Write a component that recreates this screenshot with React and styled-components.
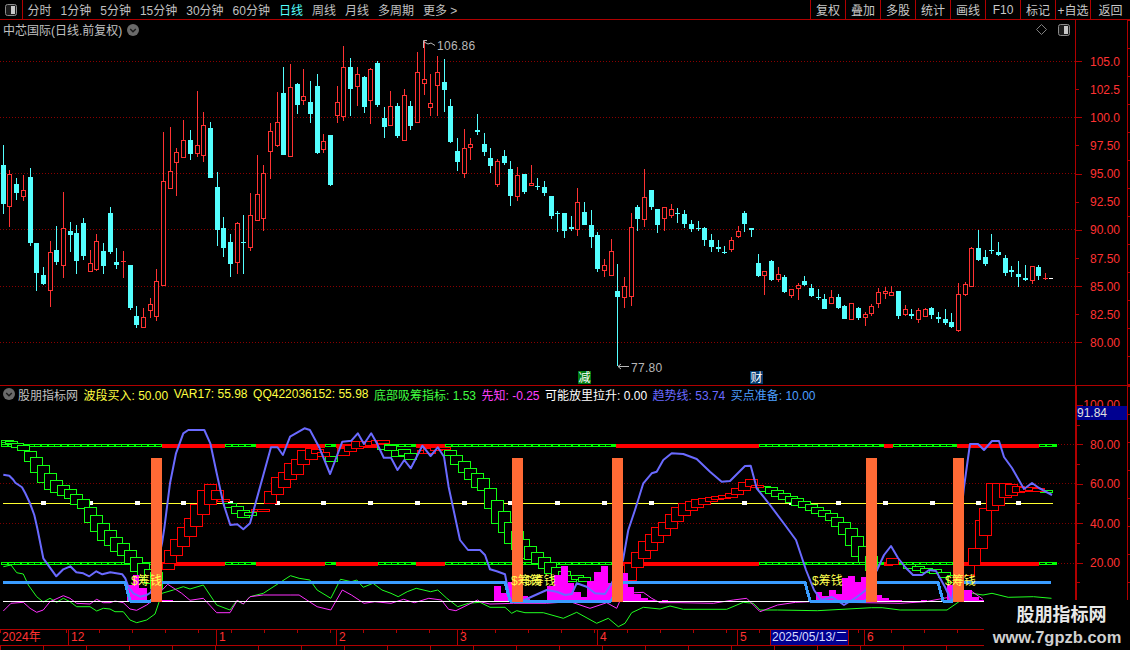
import React from 'react'
import styled, { createGlobalStyle } from 'styled-components'

const RED_LINE = '#b00000'
const UP = '#ff3232'
const DOWN = '#54ffff'
const FONT = `"Liberation Sans", "Noto Sans CJK SC", sans-serif`

const GlobalStyle = createGlobalStyle`
  html, body { margin: 0; padding: 0; background: #000; overflow: hidden; }
  body { font-family: ${FONT}; font-size: 12px; color: #c0c0c0; }
`

// candles as read from the chart: [kind, high, bodyTop, bodyBottom, low], zoomed 3x around yBase
const zoneA = [['c',315,375,492,522],['r',390,402,500,561],['c',414,432,459,480],['r',405,451,470,483],['c',384,411,609,618],['c',609,609,699,753],['c',681,705,732,735],['r',603,637,752,801],['c',558,630,666,675],['r',456,565,677,714],['c',546,573,585,636],['c',555,579,663,702],['c',534,549,648,660],['r',630,670,697,697],['r',582,604,689,693],['c',609,633,678,702],['c',501,519,636,642],['c',624,666,675,687],['r',633,664,665,714],['c',675,675,804,810],['c',798,828,855,864],['r',804,832,863,863],['r',774,793,812,834],['r',687,724,830,843],['r',276,424,738,738],['r',261,394,446,446],['r',324,337,368,468],['r',240,301,353,353],['c',270,300,342,360],['r',153,316,341,351],['r',216,256,347,366],['c',246,264,414,414],['c',396,441,570,618],['c',531,564,624,651],['c',582,606,672,711],['r',546,550,668,702],['c',525,606,608,702],['r',459,526,623,633],['r',345,463,542,542],['r',375,400,536,573],['r',249,274,335,417],['r',156,247,317,320]]
const zoneB = [['c',111,189,375,375],['r',102,172,380,380],['c',159,163,225,252],['r',117,199,212,225],['c',153,216,252,279],['c',132,168,369,372],['r',312,334,359,369],['c',315,315,465,468],['r',168,217,257,279],['r',48,112,260,273],['c',84,111,177,258],['r',111,133,170,228],['c',138,141,231,249],['r',114,118,212,282],['c',93,99,225,231],['c',231,264,291,324],['r',183,229,287,287],['c',219,228,318,324],['r',177,196,332,332],['c',213,228,288,300],['r',66,127,278,278],['r',30,148,161,195],['r',132,220,233,258],['r',78,127,167,258],['c',87,156,180,246],['c',207,228,336,339],['c',324,363,396,423],['r',297,355,431,444],['r',324,343,353,390],['c',252,300,305,315],['c',309,342,366,378],['c',354,384,408,429],['r',387,394,464,471],['c',360,378,399,405],['c',393,417,498,528],['r',411,436,500,513],['c',432,432,486,492],['r',405,460,467,467],['c',444,468,470,480],['c',453,471,489,498],['c',498,498,558,567],['c',543,549,551,606]]
const zoneC = [['c',159,159,213,234],['c',168,201,207,213],['r',84,127,209,228],['c',126,156,195,195],['c',150,195,231,264],['c',216,225,327,336],['r',297,316,332,351],['r',237,274,347,347],['c',312,393,411,618],['r',351,379,413,444],['r',159,202,410,438],['c',135,141,177,213],['r',27,112,181,201],['c',90,90,141,150],['c',147,147,195,219],['r',141,142,176,213],['r',132,148,167,174],['c',144,159,161,189],['c',150,162,192,204],['c',180,192,207,216],['c',183,205,207,213],['c',201,204,240,258],['c',222,240,261,276],['c',240,262,267,276],['c',258,277,279,282],['r',231,241,269,276],['r',198,214,231,234],['c',153,159,192,216],['c',204,204,209,231],['c',282,309,348,351],['r',334,334,347,405],['c',300,303,360,363],['r',321,343,359,366],['c',345,351,396,399],['r',388,388,408,414],['r',369,376,388,420],['c',348,363,375,378],['c',372,384,408,411],['c',387,411,415,420]]
const zoneD = [['c',252,267,297,297],['r',240,262,281,281],['c',252,261,294,297],['c',285,288,327,327],['r',280,280,329,329],['c',291,294,324,330],['r',306,313,323,348],['r',282,289,311,318],['r',234,247,281,294],['r',231,244,251,267],['r',228,247,257,257],['c',243,243,318,327],['r',285,298,315,318],['c',297,312,318,327],['r',294,301,329,339],['r',294,298,320,321],['c',291,294,315,327],['c',306,321,327,339],['c',297,327,339,345],['c',309,336,351,354],['r',219,253,362,366],['r',216,223,255,258],['r',111,115,230,230],['c',60,114,150,153],['c',120,141,162,168],['c',72,120,123,132],['c',96,126,135,138],['c',135,144,189,198],['c',168,180,186,201],['c',153,192,201,231],['c',165,204,210,213],['r',168,169,212,222],['c',165,171,198,210],['r',189,204,209,209]]

const toReal = (list, base) => list.map(([k, ...v]) => [k, ...v.map(n => base + n / 3)])
const candles = [...toReal(zoneA, 40), ...toReal(zoneB, 30), ...toReal(zoneC, 160), ...toReal(zoneD, 210)]

const tabs = [
  { label: '分时' }, { label: '1分钟' }, { label: '5分钟' }, { label: '15分钟' }, { label: '30分钟' },
  { label: '60分钟' }, { label: '日线', active: true }, { label: '周线' }, { label: '月线' }, { label: '多周期' }, { label: '更多 >' },
]
const actions = ['复权', '叠加', '多股', '统计', '画线', 'F10', '标记', '+自选', '返回']
const prices = ['105.0', '102.5', '100.0', '97.50', '95.00', '92.50', '90.00', '87.50', '85.00', '82.50', '80.00']
const lowerAxis = ['100.00', '', '80.00', '', '60.00', '', '40.00', '', '20.00', '']

const readouts = [
  { text: '波段买入: 50.00', color: '#ffff40' },
  { text: 'VAR17: 55.98', color: '#ffff40' },
  { text: 'QQ422036152: 55.98', color: '#ffff40' },
  { text: '底部吸筹指标: 1.53', color: '#40ff40' },
  { text: '先知: -0.25', color: '#ff40ff' },
  { text: '可能放里拉升: 0.00', color: '#ffffff' },
  { text: '趋势线: 53.74', color: '#6a6aff' },
  { text: '买点准备: 10.00', color: '#4d9fff' },
]

const months = [
  { w: 68, label: '2024年' }, { w: 148, label: '12' }, { w: 120, label: '1' }, { w: 121, label: '2' },
  { w: 140, label: '3' }, { w: 140, label: '4' }, { w: 33, label: '5' }, { w: 78, label: '2025/05/13/二', current: true },
  { w: 16, label: '' }, { w: 120, label: '6' },
]

// z3: the 3x crops, xz: the wider crops which came out about 2.775x across
const z3 = (list, ox, oy) => list.map(([x, ...rest]) => [ox + x / 3, ...rest.map(n => oy + n / 3)])
const xz = (list, ox, oy) => list.map(([x, ...rest]) => [ox + x / 2.775, ...rest.map(n => oy + n / 3)])
const pts = list => list.map(([x, y]) => `${x.toFixed(1)},${y.toFixed(1)}`).join(' ')
const byX = list => [...list].sort((a, b) => a[0] - b[0])

const bandRanges = [
  ['g', 1, 162], ['r', 162, 225], ['g', 225, 255.5], ['r', 255.5, 325], ['g', 325, 335.5], ['r', 335.5, 378], ['g', 378, 416],
  ['r', 416, 445], ['g', 445, 616], ['r', 616, 759], ['g', 759, 884], ['r', 884, 893], ['g', 893, 957], ['r', 957, 1039], ['g', 1039, 1057],
]

const greenBoxes = [
  ...z3([[3,31,37],[3,37,43],[14,34,41],[32,40,52],[52,46,62],[73,62,92],[91,82,127],[112,106,157],[133,130,177],[151,151,187],[172,166,196],[193,178,206],[211,193,223],[232,208,235],[253,232,277],[271,256,305],[292,280,331],[313,301,346],[331,322,364],[352,340,376],[373,361,400],[391,382,424],[412,400,442],[433,418,460],[451,427,475],[673,220,232],[694,229,250],[712,241,262],[733,247,256]], 0, 430),
  [325,456,461],[377,444,449],[384,445,450],[391,450,456],[397.5,449,455],[404,453,459],[444,450,455],[450,455,464],[457.7,461,472],[464,468,479],[471,473,487],
  ...z3([[-8,145,181],[13,175,236],[33,211,281],[55,244,308],[73,277,340],[94,304,358],[112,328,385],[133,349,388],[154,367,400],[175,382,415],[193,397,430],[214,412,445],[235,424,448],[253,436,454],[274,436,448],[295,442,454]], 480, 430),
  [758,486,491],[765,487,493],[771,490,496],[778,493,499],[785,496,502],[791,498,505],[798,501,507],[805,504,510],[811,507,513],[818,510,516],[825,513,520],[831,517,526],[838,522,534],[845,528,545],[851,536,556],[858,546,562],[865,556,570],
  [903,564,568],[912,566,570],[920,568,572],[929,569,573],[938,572,577],[947,575,582],[1040,490,492],
]
const redBoxes = [
  ...z3([[486,400,418],[493,361,400],[511,328,376],[532,292,349],[553,265,320],[571,223,289],[592,181,253],[613,163,223],[634,181,208],[652,208,214],[754,238,244],[772,237,244]], 0, 430),
  [264,491,503],[271,477,494],[277.5,472,487],[284,463,479],[291,459,474],[297,450,464],[304.5,448,459],[311,449,453],[317,452,456],
  [337,448,455],[344,445,451],[351,441,448],[358.5,441,446],[365,441,445],[371,440,444],[377,440,443],
  [417,450,453],[423,448,453],[430,447,450],[438,447,449],
  ...z3([[433,400,451],[454,367,412],[475,334,385],[496,311,358],[514,292,337],[535,277,317],[556,253,295],[574,232,274],[595,220,256],[616,214,241],[634,208,232],[655,205,223],[676,202,214],[694,199,208],[715,196,205],[736,190,202],[754,175,193],[775,157,181],[796,148,169],[812,165,172]], 480, 430),
  [886,558,564],[962,565,575],[968,548,565],[975,520,548],[979,508,535],[986,483,510],[992,483,505],[999,483,497],[1005,484,495],[1012,486,492],[1019,487,491],[1025,487,490],[1032,488,491],
]

const trendLine = [
  ...z3([[10,134],[28,137],[40,149],[46,158],[66,172],[76,190],[90,220],[103,255],[112,295],[121,340],[130,385],[169,439],[190,418],[211,409],[229,427],[250,430],[268,439],[289,424],[307,433],[331,427],[367,433],[376,445],[385,470],[400,490],[420,500],[440,495],[453,487],[486,340],[493,295],[510,160],[528,70],[550,10],[565,0],[592,0],[613,0],[631,40],[650,130],[670,220],[691,285],[712,283],[730,298],[750,280]], 0, 430),
  ...xz([[752,232],[770,232],[785,255],[805,200],[845,175],[860,180],[885,230],[916,312],[950,215],[975,212],[993,190],[1010,222],[1030,190],[1045,218],[1065,263],[1085,263],[1103,300],[1122,270],[1140,295],[1172,227],[1195,258],[1215,232],[1232,260],[1245,350]], 0, 370),
  [460,540],[468,550],
  ...z3([[0,360],[15,375],[30,418],[50,424],[75,433],[90,510],[133,510],[200,480],[230,485],[255,495],[275,492],[290,460],[320,470],[345,490],[375,492],[395,460],[429,390],[445,300],[465,240],[490,160],[515,130],[530,125],[550,90],[575,70],[610,72],[650,87],[690,125],[725,155],[750,153],[795,108],[812,107],[830,175]], 480, 430),
  [770,505],[785,525],[796,540],[806,570],[814,590],[821,600],[832,597],[844,605],[857,597],[866,590],
  [877,570],[884,555],[891,546],[898,558],[906,568],[913,575],[922,575],[929,570],[936,571],[945,587],[952,602],
  [964,487],[970,444],[978,444],[984,450],[992,441],[999,441],[1004,457],[1012,468],[1024,489],[1032,483],[1039,488],[1052,495],
]

const buyLine = [[3,582],[125,582],[130,601],[151,601],[162,582],[505,582],[510,601],[523,601],[611,601],[623,582],[805,582],[810,601],[866,601],[877,582],[938,582],[943,601],[953,601],[964,582],[1051,582]]

const greenLine = byX([
  ...z3([[10,410],[33,405],[50,428],[70,432],[85,465],[110,500],[130,516],[150,505],[170,517],[190,505],[210,515],[230,530],[270,530],[290,543],[310,535],[330,537],[345,545],[370,545],[390,570],[410,578],[440,570],[465,552],[486,490],[520,480],[550,470],[570,477],[610,465],[650,525],[690,540],[710,512],[730,522],[750,500],[790,490]], 0, 430),
  ...xz([[806,107],[830,115],[860,120],[880,150],[918,175],[945,118],[975,125],[990,120],[1008,142],[1035,130],[1060,150],[1085,160],[1105,170],[1130,155],[1155,145],[1195,155],[1215,150],[1240,175],[1270,200],[1300,190]], 0, 540),
  ...z3([[0,517],[30,532],[75,532],[95,550],[110,542],[135,548],[190,548],[250,565],[290,547],[350,580],[385,565],[415,590],[435,580],[455,548],[490,532],[540,537],[570,528],[610,538],[740,538],[790,517],[820,520],[840,540]], 480, 430),
  ...xz([[590,210],[700,212],[850,203],[880,203],[930,210],[1060,210],[1100,180],[1130,160],[1160,165],[1185,160],[1230,172],[1300,170],[1350,175]], 565, 540),
])
const magentaLine = byX([
  ...z3([[10,543],[33,520],[70,517],[90,535],[110,547],[130,540],[150,515],[190,497],[210,505],[230,520],[270,522],[290,508],[310,518],[330,518],[345,513],[370,518],[390,537],[410,541],[440,525],[453,515],[503,463],[545,490],[570,511],[610,505],[650,548],[690,548],[712,511],[730,522],[750,500],[790,495]], 0, 430),
  ...xz([[805,165],[830,165],[880,200],[918,210],[950,150],[975,165],[1010,190],[1040,185],[1085,190],[1120,178],[1150,188],[1190,175],[1225,180],[1245,208],[1265,212],[1325,180]], 0, 540),
  ...z3([[0,515],[30,522],[100,520],[200,520],[270,515],[330,535],[380,518],[410,535],[430,490],[490,487],[515,505],[540,518],[600,518],[700,520],[760,510],[800,505],[825,530],[840,545]], 480, 430),
  ...xz([[590,195],[640,187],[680,185],[930,190],[1000,185],[1100,165],[1130,155],[1160,178]], 565, 540),
])

// histogram bars: [left, right, top], the foot is always the white base line
const histogram = [
  [127,133,585],[133,139,575],[139,147,588],[162,173,600],
  ...[[42,63,468],[63,84,489],[84,96,456],[130,144,498],[144,151,507],[200,221,468],[221,243,435],[243,264,408],[264,283,459],[283,303,486],[303,321,501],[321,342,453],[342,363,426],[363,384,408],[384,396,459],[429,444,430],[444,462,471],[462,483,491],[483,504,504],[504,525,510],[545,565,511]]
    .map(([l, r, t]) => [480 + l / 3, 480 + r / 3, 430 + t / 3]),
  [816,822,592],[822,829,596],[829,836,590],[836,842,594],[842,848,578],[848,855,576],[855,861,582],[861,866,577],
  [877,882,595],[882,889,598],[889,902,600],[921,927,600],[931,942,601],[947,953,585],[964,972,590],[972,979,597],[979,984,600],
]

const squares = [43,90,137,183,230,277,323,370,417,464,510,557,604,651,697,744,791,838,885,932,978,1018]
const bars = [151, 512, 612, 866, 953]
const moneyTags = [[131,582],[511,582],[525,582],[812,582],[945,582]]

const Page = styled.div`
  position: relative;
  width: 1130px;
  height: 650px;
  background: #000;
  overflow: hidden;
`
const Toolbar = styled.div`
  display: flex;
  justify-content: space-between;
  height: 20px;
  box-sizing: border-box;
  border-bottom: 1px solid ${RED_LINE};
`
const ToolGroup = styled.div`
  display: flex;
  align-items: stretch;
`
const PanelToggle = styled.div`
  width: 23px;
  box-sizing: border-box;
  display: flex;
  align-items: center;
  justify-content: center;
  border-right: 1px solid ${RED_LINE};
`
const TabList = styled.div`
  display: flex;
  align-items: center;
  gap: 9px;
  padding-left: 4.5px;
`
const Tab = styled.span`
  color: ${p => (p.$active ? '#54ffff' : '#c0c0c0')};
  white-space: nowrap;
`
const Action = styled.div`
  width: ${p => (p.$last ? 40 : 35)}px;
  box-sizing: border-box;
  display: flex;
  align-items: center;
  justify-content: center;
  border-left: 1px solid ${RED_LINE};
  color: #c8c8c8;
  white-space: nowrap;
`
const MainRow = styled.div`
  display: flex;
  height: 366px;
  border-bottom: 1px solid ${RED_LINE};
  box-sizing: border-box;
`
const ChartColumn = styled.div`
  width: 1075px;
  display: flex;
  flex-direction: column;
`
const TitleRow = styled.div`
  height: 19px;
  display: flex;
  align-items: center;
  gap: 5px;
  padding: 0 3px;
  color: #c0c0c0;
`
const TitleTools = styled.div`
  margin-left: auto;
  display: flex;
  align-items: center;
  gap: 11px;
  padding-right: 2px;
`
const PriceAxis = styled.div`
  width: 52px;
  box-sizing: border-box;
  border-left: ${p => p.$thick || 1}px solid ${RED_LINE};
  padding-top: ${p => p.$top}px;
  position: relative;
`
const AxisRow = styled.div`
  height: ${p => p.$h}px;
  display: flex;
  align-items: center;
  justify-content: space-between;
`
const AxisTick = styled.i`
  display: block;
  width: ${p => p.$w}px;
  height: 1px;
  background: ${RED_LINE};
`
const AxisLabel = styled.span`
  color: ${UP};
  padding-right: 7px;
`
const RightStrip = styled.div`
  flex: 1;
  box-sizing: border-box;
  border-left: 1px solid ${RED_LINE};
  background: repeating-linear-gradient(to bottom, ${RED_LINE} 0 1px, transparent 1px 28px);
`
const LowerRow = styled.div`
  display: flex;
  height: 244px;
  box-sizing: border-box;
  border-bottom: 1px solid ${RED_LINE};
`
const ReadoutBar = styled.div`
  height: 16px;
  display: flex;
  align-items: center;
  gap: 5.5px;
  padding-left: 3px;
  white-space: nowrap;
`
const IndicatorName = styled.span`
  color: #c0c0c0;
  margin-left: -2.5px;
`
const Readout = styled.span`
  color: ${p => p.$color};
`
const CursorValue = styled.div`
  position: absolute;
  left: 0;
  top: 20px;
  width: 50px;
  height: 14px;
  line-height: 14px;
  background: #000090;
  color: #e0e0e0;
`
const DateAxis = styled.div`
  display: flex;
  width: 984px;
  height: 15px;
  border-bottom: 1px solid ${RED_LINE};
  background: repeating-linear-gradient(to right, ${RED_LINE} 0 1px, transparent 1px 33px) top / 100% 3px no-repeat;
`
const DateCell = styled.div`
  width: ${p => p.$w}px;
  box-sizing: border-box;
  border-left: 1px solid ${RED_LINE};
  padding-left: ${p => (p.$current ? 1 : 2)}px;
  line-height: 15px;
  white-space: nowrap;
  overflow: hidden;
  color: ${p => (p.$current ? '#d8dcff' : UP)};
  background: ${p => (p.$current ? '#000090' : 'transparent')};
  &:first-child { border-left: none; }
`
const SubAxis = styled.div`
  width: 984px;
  height: 4px;
  background: repeating-linear-gradient(to right, ${RED_LINE} 0 1px, transparent 1px 43px);
`
const Watermark = styled.div`
  position: absolute;
  right: 0;
  bottom: 0;
  width: 146px;
  height: 50px;
  background: #000;
  display: flex;
  flex-direction: column;
  align-items: center;
  color: #e8e8e8;
  font-weight: 700;
`
const WatermarkName = styled.div`
  font-size: 18px;
  line-height: 24px;
  padding-left: 9px;
  margin-top: 3px;
`
const WatermarkUrl = styled.div`
  font-size: 16.5px;
  line-height: 21px;
  color: #d0d0d0;
`
const ChartSvg = styled.svg`
  display: block;
  shape-rendering: crispEdges;
`
const ChartLine = styled.polyline`
  fill: none;
  stroke: ${p => p.$color};
  stroke-width: ${p => p.$width};
  shape-rendering: ${p => (p.$smooth ? 'auto' : 'crispEdges')};
  stroke-linejoin: round;
`
const PriceNote = styled.text`
  fill: #b8b8b8;
  font-family: ${FONT};
  font-size: 12px;
  letter-spacing: 0.3px;
`
const MoneyTag = styled.text`
  fill: #ffff50;
  font-family: ${FONT};
  font-size: 12px;
  dominant-baseline: middle;
`
const BadgeText = styled.text`
  fill: #fff;
  font-family: ${FONT};
  font-size: 12px;
  text-anchor: middle;
`

const HalfSquare = () => (
  <svg width="12" height="12" viewBox="0 0 12 12">
    <rect x="0.5" y="0.5" width="11" height="11" rx="2" fill="#1c1c1c" stroke="#8c8c8c" />
    <rect x="6" y="2" width="4" height="8" fill="#c8c8c8" />
  </svg>
)
const ChevronDot = () => (
  <svg width="12" height="12" viewBox="0 0 12 12">
    <circle cx="6" cy="6" r="6" fill="#6a6a6a" />
    <path d="M3.2 5 L6 7.8 L8.8 5" fill="none" stroke="#1a1a1a" strokeWidth="1.4" />
  </svg>
)
const Diamond = () => (
  <svg width="11" height="11" viewBox="0 0 11 11">
    <path d="M5.5 0.5 L10.5 5.5 L5.5 10.5 L0.5 5.5 Z" fill="none" stroke="#808080" />
  </svg>
)

const Candle = ({ data, index }) => {
  const [kind, high, top, bottom, low] = data
  const col = Math.floor(3.3 + index * 6.68)
  const h = Math.max(1, bottom - top)
  if (kind === 'c') {
    return (
      <g fill={DOWN}>
        <rect x={col} y={high} width="1" height={Math.max(0, low - high)} />
        <rect x={col - 2} y={top} width="5" height={h} />
      </g>
    )
  }
  return (
    <g>
      <rect x={col} y={high} width="1" height={Math.max(0, low - high)} fill={UP} />
      {h > 2
        ? <rect x={col - 1.5} y={top + 0.5} width="4" height={h - 1} fill="#000" stroke={UP} />
        : <rect x={col - 2} y={top} width="5" height="1" fill={UP} />}
    </g>
  )
}

const Candles = () => (
  <ChartSvg width="1075" height="346" viewBox="0 39 1075 346">
    {[61, 117, 173, 229, 286, 342].map(y => (
      <line key={y} x1="0" x2="1075" y1={y + 0.5} y2={y + 0.5} stroke="#8a0000" strokeDasharray="1 2" />
    ))}
    {candles.map((c, i) => <Candle key={i} data={c} index={i} />)}
    <rect x="1049" y="278" width="4" height="1" fill="#fff" />

    <path d="M423.5 48 V40.5 H427 M424 42 L428 44 L431 43 L435 45.5" fill="none" stroke="#b8b8b8" shapeRendering="auto" />
    <PriceNote x="437" y="50">106.86</PriceNote>
    <path d="M618 366.5 H629 M618 366.5 L621 364 M618 366.5 L621 369" fill="none" stroke="#b8b8b8" shapeRendering="auto" />
    <PriceNote x="631" y="371.5">77.80</PriceNote>

    <rect x="578" y="371" width="13" height="13" fill="#007a10" />
    <BadgeText x="584.5" y="382">减</BadgeText>
    <rect x="750" y="371" width="13" height="13" fill="#043a6e" />
    <BadgeText x="756.5" y="382">财</BadgeText>
  </ChartSvg>
)

// y is the top pixel row of the band; a green stretch is two lines with a short black gap per candle
const Band = ({ y }) => (
  <g>
    {bandRanges.map(([kind, from, to]) => {
      if (kind === 'r') return <rect key={from} x={from} y={y} width={to - from} height="4" fill="#ff0000" />
      const gaps = []
      for (let x = from + 1; x < to - 5; x += 6.68) gaps.push(x)
      return (
        <g key={from}>
          <rect x={from} y={y} width={to - from} height="3" fill="#00ff00" />
          {gaps.map(x => <rect key={x} x={Math.round(x)} y={y + 1} width="5" height="1" fill="#000" />)}
        </g>
      )
    })}
  </g>
)

const StepBox = ({ box, color }) => {
  const [left, top, bottom] = box
  return (
    <rect
      x={Math.round(left) + 0.5}
      y={Math.round(top) + 0.5}
      width="12"
      height={Math.max(1, Math.round(bottom - top))}
      fill="#000"
      stroke={color}
    />
  )
}

const Indicator = () => (
  <ChartSvg width="1075" height="227" viewBox="0 402 1075 227">
    {[483, 523].map(y => (
      <line key={y} x1="0" x2="1075" y1={y + 0.5} y2={y + 0.5} stroke="#7a0000" strokeDasharray="1 2" />
    ))}
    <line x1="1058" x2="1075" y1="444.5" y2="444.5" stroke="#8a0000" strokeDasharray="1 2" />
    <line x1="1058" x2="1075" y1="563.5" y2="563.5" stroke="#8a0000" strokeDasharray="1 2" />
    <rect x="3" y="503" width="1050" height="1" fill="#ffff30" />
    {squares.map(x => <rect key={x} x={x - 2} y="501" width="5" height="4" fill="#fff" />)}

    <Band y={444} />
    <Band y={562} />
    {greenBoxes.map((b, i) => <StepBox key={i} box={b} color="#10ff10" />)}
    {redBoxes.map((b, i) => <StepBox key={i} box={b} color="#ff0000" />)}

    <ChartLine points={pts(greenLine)} $color="#20ff20" $width={1} $smooth />
    <ChartLine points={pts(magentaLine)} $color="#ff30ff" $width={1} $smooth />
    {histogram.map(([l, r, t], i) => (
      <rect key={i} x={Math.round(l)} y={Math.round(t)} width={Math.max(1, Math.round(r) - Math.round(l))} height={Math.max(0, 602 - Math.round(t))} fill="#ff00ff" />
    ))}
    <rect x="3" y="601" width="981" height="1" fill="#fff" />
    <ChartLine points={pts(trendLine)} $color="#6a6aff" $width={2} $smooth />
    <ChartLine points={pts(buyLine)} $color="#3a9cff" $width={3} />

    {bars.map(x => <rect key={x} x={x} y="458" width="11" height="144" fill="#ff6a35" />)}
    {moneyTags.map(([x, y]) => <MoneyTag key={x} x={x} y={y}>$筹钱</MoneyTag>)}
  </ChartSvg>
)

export default function App() {
  return (
    <Page>
      <GlobalStyle />
      <Toolbar>
        <ToolGroup>
          <PanelToggle><HalfSquare /></PanelToggle>
          <TabList>
            {tabs.map(t => <Tab key={t.label} $active={t.active}>{t.label}</Tab>)}
          </TabList>
        </ToolGroup>
        <ToolGroup>
          {actions.map((a, i) => <Action key={a} $last={i === actions.length - 1}>{a}</Action>)}
        </ToolGroup>
      </Toolbar>

      <MainRow>
        <ChartColumn>
          <TitleRow>
            <span>中芯国际(日线.前复权)</span>
            <ChevronDot />
            <TitleTools><Diamond /><HalfSquare /></TitleTools>
          </TitleRow>
          <Candles />
        </ChartColumn>
        <PriceAxis $top={27.5}>
          {prices.map((p, i) => (
            <AxisRow key={p} $h={28.15}>
              <AxisTick $w={i % 2 === 0 ? 6 : 3} />
              <AxisLabel>{p}</AxisLabel>
            </AxisRow>
          ))}
        </PriceAxis>
        <RightStrip />
      </MainRow>

      <LowerRow>
        <ChartColumn>
          <ReadoutBar>
            <ChevronDot />
            <IndicatorName>股朋指标网</IndicatorName>
            {readouts.map(r => <Readout key={r.text} $color={r.color}>{r.text}</Readout>)}
          </ReadoutBar>
          <Indicator />
        </ChartColumn>
        <PriceAxis $top={9.5} $thick={2}>
          {lowerAxis.map((p, i) => (
            <AxisRow key={i} $h={19.72}>
              <AxisTick $w={p ? 6 : 3} />
              {p && <AxisLabel>{p}</AxisLabel>}
            </AxisRow>
          ))}
          <CursorValue>91.84</CursorValue>
        </PriceAxis>
        <RightStrip />
      </LowerRow>

      <DateAxis>
        {months.map((m, i) => <DateCell key={i} $w={m.w} $current={m.current}>{m.label}</DateCell>)}
      </DateAxis>
      <SubAxis />

      <Watermark>
        <WatermarkName>股朋指标网</WatermarkName>
        <WatermarkUrl>www.7gpzb.com</WatermarkUrl>
      </Watermark>
    </Page>
  )
}
